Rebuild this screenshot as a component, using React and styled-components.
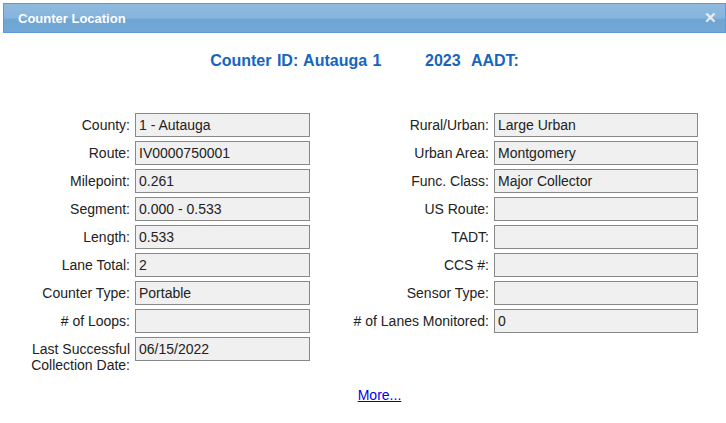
import React from "react";
import styled, { createGlobalStyle } from "styled-components";

const Global = createGlobalStyle`
  body { margin: 0; background: #fff; font-family: Arial, "Liberation Sans", sans-serif; }
`;
const Dialog = styled.div`
  margin: 3px 0 0 3px; width: 723px; height: 420px; background: #fff;
`;
const TitleBar = styled.div`
  height: 28px; display: flex; align-items: center; justify-content: space-between;
  padding: 0 8px 0 14px; border: 1px solid #5a9bd5;
  background: linear-gradient(#8fbade 0%, #86b4dc 50%, #6ea5d3 55%, #72a8d6 100%);
  color: #fff; font-weight: bold; font-size: 13px;
`;
const Close = styled.span` font-size: 15px; color: #e6eef6; font-weight: bold; `;
const Heading = styled.div`
  text-align: center; margin-top: 19px; color: #1565c0; font-weight: bold; font-size: 16px;
  word-spacing: 1px;
`;
const Grid = styled.div`
  margin-top: 43px; display: grid;
  grid-template-columns: 127px 175px 174px 204px; column-gap: 5px; row-gap: 4px;
  grid-auto-rows: 24px;
`;
const Label = styled.div`
  text-align: right; font-size: 14px; color: #222; line-height: 16px;
  align-self: ${p => (p.top ? "start" : "center")};
  margin-top: ${p => (p.top ? "4px" : "0")};
`;
const Field = styled.div`
  box-sizing: border-box; height: 24px; border: 1px solid #888; background: #f0f0f0;
  font-size: 14px; color: #222; padding: 0 3px; display: flex; align-items: center;
`;
const Blank = styled.div``;
const More = styled.a`
  display: block; text-align: center; margin-top: 26px; margin-left: 30px; font-size: 14px;
  color: #0000ee; text-decoration: underline;
`;

const rows = [
  ["County:", "1 - Autauga", "Rural/Urban:", "Large Urban"],
  ["Route:", "IV0000750001", "Urban Area:", "Montgomery"],
  ["Milepoint:", "0.261", "Func. Class:", "Major Collector"],
  ["Segment:", "0.000 - 0.533", "US Route:", ""],
  ["Length:", "0.533", "TADT:", ""],
  ["Lane Total:", "2", "CCS #:", ""],
  ["Counter Type:", "Portable", "Sensor Type:", ""],
  ["# of Loops:", "", "# of Lanes Monitored:", "0"],
];

export default function App() {
  return (
    <>
      <Global />
      <Dialog>
        <TitleBar>Counter Location<Close>✕</Close></TitleBar>
        <Heading>Counter ID: Autauga 1&nbsp;&nbsp;&nbsp;&nbsp;&nbsp;&nbsp;&nbsp;&nbsp;2023&nbsp; AADT:</Heading>
        <Grid>
          {rows.map((r, i) => (
            <React.Fragment key={i}>
              <Label>{r[0]}</Label><Field>{r[1]}</Field>
              <Label>{r[2]}</Label><Field>{r[3]}</Field>
            </React.Fragment>
          ))}
          <Label top>Last Successful<br />Collection Date:</Label>
          <Field>06/15/2022</Field>
          <Blank /><Blank />
        </Grid>
        <More href="#">More...</More>
      </Dialog>
    </>
  );
}
